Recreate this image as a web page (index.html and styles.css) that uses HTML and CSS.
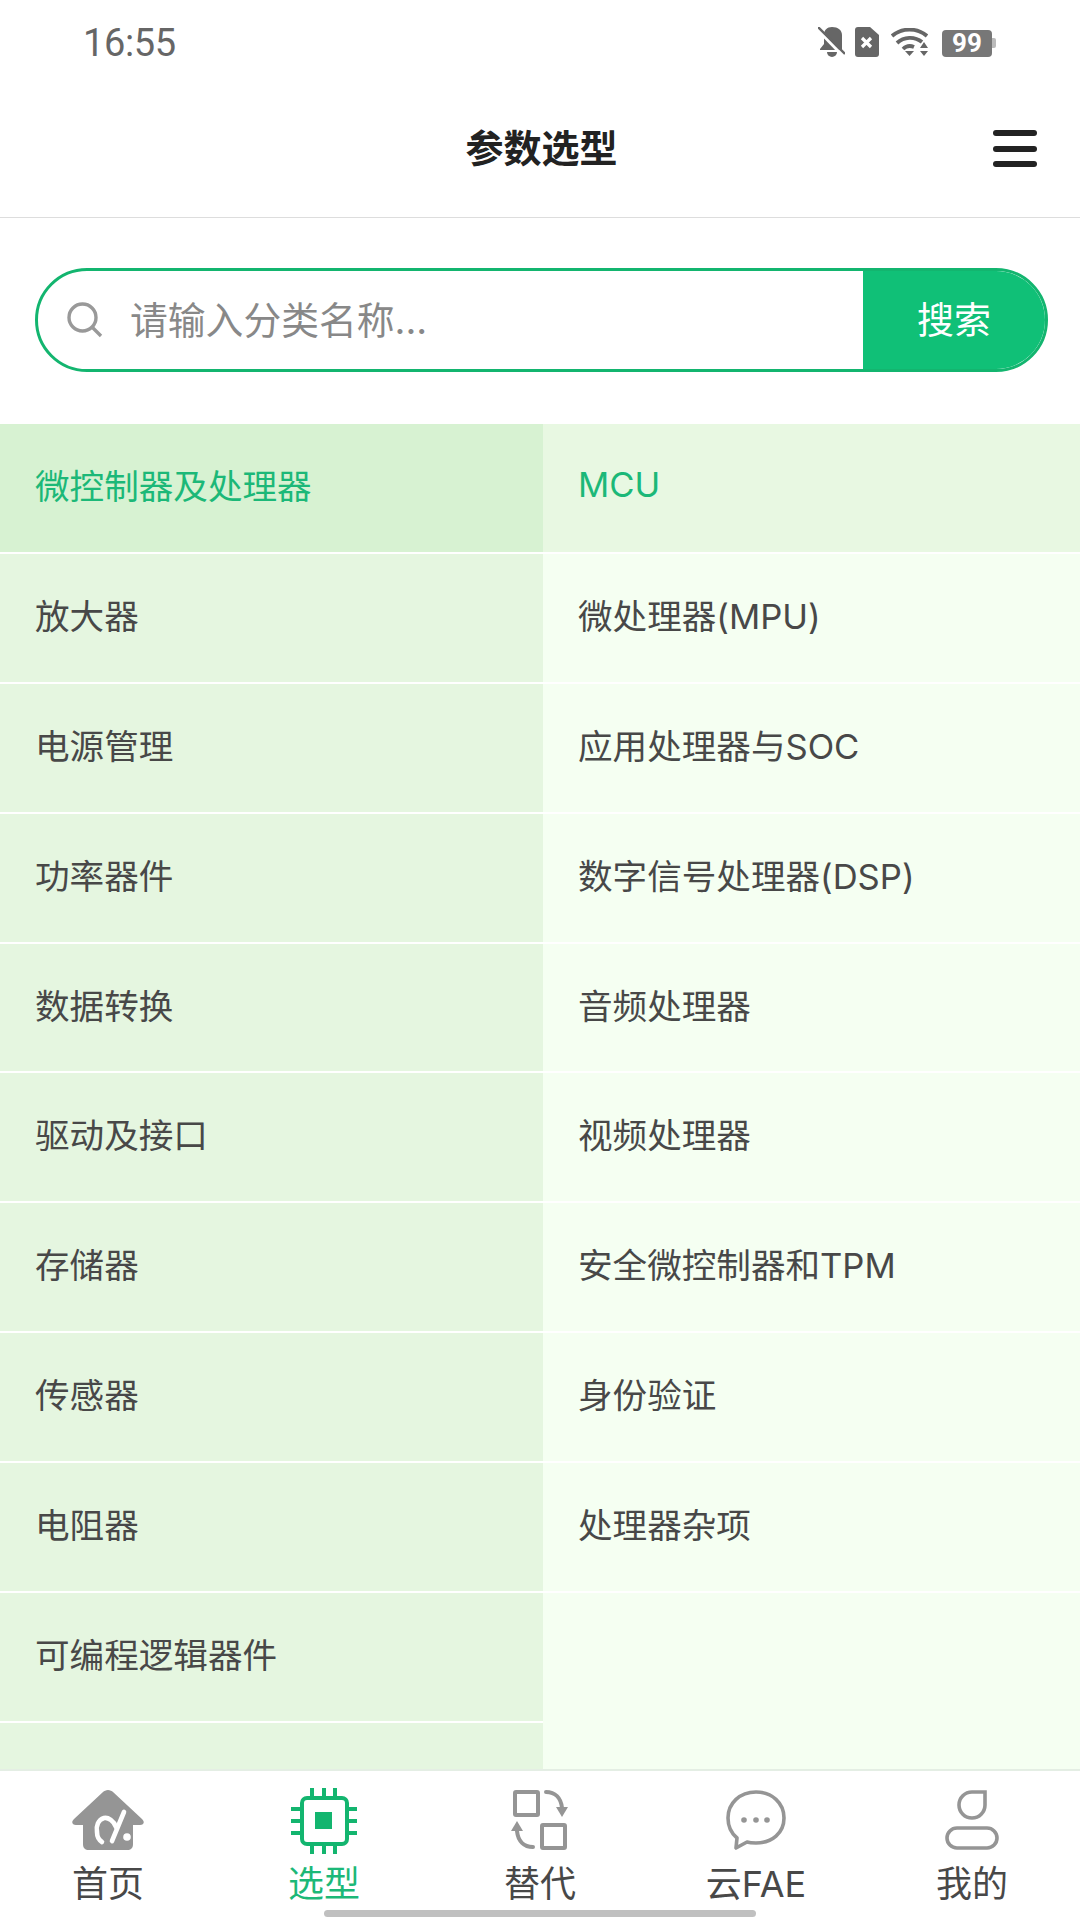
FILE: index.html
```html
<!DOCTYPE html>
<html lang="zh-CN">
<head>
  <meta charset="UTF-8" />
  <meta name="viewport" content="width=device-width, initial-scale=1.0" />
  <title>参数选型</title>
  <link rel="stylesheet" href="styles.css">
</head>
<body>
  <div class="page">
    <!-- Status bar -->
    <div class="status-bar">
      <span class="status-time">16:55</span>
      <div class="status-icons">
        <svg class="st-bell" width="27" height="30" viewBox="0 0 27 30">
          <path d="M14 0c-5 0-8 3-8 8v9l-4 5v1h22V8c0-5-4-8-10-8z" fill="#666"/>
          <path d="M9 25h10a5 5 0 0 1-10 0z" fill="#666"/>
          <path d="M0 3l24 25" stroke="#fff" stroke-width="3"/>
          <path d="M0 0l27 27" stroke="#666" stroke-width="2.4"/>
        </svg>
        <svg class="st-sim" width="24" height="30" viewBox="0 0 24 30">
          <path d="M3 0h12l9 8v19a3 3 0 0 1-3 3H3a3 3 0 0 1-3-3V3a3 3 0 0 1 3-3z" fill="#666"/>
          <path d="M7 11l9 9M16 11l-9 9" stroke="#fff" stroke-width="3.2"/>
        </svg>
        <svg class="st-wifi" width="37" height="28" viewBox="0 0 37 28">
          <path d="M1 8a27 27 0 0 1 35 0" fill="none" stroke="#666" stroke-width="3.8"/>
          <path d="M6 15a19 19 0 0 1 25-1" fill="none" stroke="#666" stroke-width="3.8"/>
          <path d="M12 21a10 10 0 0 1 11-2" fill="none" stroke="#666" stroke-width="3.8"/>
          <path d="M14 23h9l-4.5 5z" fill="#666"/>
          <path d="M33 14l4 6h-8zM29 23h8l-4 5z" fill="#666"/>
        </svg>
        <div class="st-battery">
          <span class="st-battery-level">99</span>
          <span class="st-battery-cap"></span>
        </div>
      </div>
    </div>

    <!-- Title bar -->
    <header class="title-bar">
      <h1>参数选型</h1>
      <div class="menu-btn"><span></span><span></span><span></span></div>
    </header>

    <!-- Search -->
    <div class="search-wrap">
      <div class="search-box">
        <svg class="search-icon" width="36" height="36" viewBox="0 0 36 36">
          <circle cx="15.5" cy="15.5" r="13.5" fill="none" stroke="#999" stroke-width="3.4"/>
          <path d="M25 25l9 9" stroke="#999" stroke-width="3.4"/>
        </svg>
        <span class="search-placeholder">请输入分类名称...</span>
        <div class="search-btn">搜索</div>
      </div>
    </div>

    <!-- Category lists -->
    <div class="lists">
      <ul class="cat-list">
        <li class="active">微控制器及处理器</li>
        <li>放大器</li>
        <li>电源管理</li>
        <li>功率器件</li>
        <li>数据转换</li>
        <li>驱动及接口</li>
        <li>存储器</li>
        <li>传感器</li>
        <li>电阻器</li>
        <li>可编程逻辑器件</li>
        <li></li>
      </ul>
      <ul class="sub-list">
        <li class="active">MCU</li>
        <li>微处理器(MPU)</li>
        <li>应用处理器与SOC</li>
        <li>数字信号处理器(DSP)</li>
        <li>音频处理器</li>
        <li>视频处理器</li>
        <li>安全微控制器和TPM</li>
        <li>身份验证</li>
        <li>处理器杂项</li>
      </ul>
    </div>

    <!-- Bottom tabs -->
    <nav class="tab-bar">
      <div class="tab">
        <svg width="72" height="60" viewBox="0 0 72 60">
          <path d="M36 0c-2 0-4 1-5 2L2 29c-3 3-2 6 2 6h7v19c0 4 2 6 6 6h38c4 0 6-2 6-6V35h7c4 0 5-3 2-6L41 2c-1-1-3-2-5-2z" fill="#959595"/>
          <path d="M44 37C42 31 36 27 32 28c-6 2-8 8-7 14 0 4 2 8 5 10" fill="none" stroke="#fff" stroke-width="4.6" stroke-linecap="round"/>
          <path d="M52 22L40 51" fill="none" stroke="#fff" stroke-width="4.6" stroke-linecap="round"/>
          <circle cx="55" cy="47" r="3.8" fill="#fff"/>
        </svg>
        <span>首页</span>
      </div>
      <div class="tab tab-on">
        <svg class="tab-chip" width="66" height="66" viewBox="0 0 66 66">
          <rect x="11" y="10" width="45" height="46" rx="5" fill="none" stroke="#13b56f" stroke-width="4"/>
          <rect x="24" y="24" width="17" height="17" fill="#13b56f"/>
          <path d="M21 0v10M33 0v10M44 0v10M21 56v10M33 56v10M44 56v10M0 21h11M0 33h11M0 45h11M56 21h10M56 33h10M56 45h10" stroke="#13b56f" stroke-width="4"/>
        </svg>
        <span>选型</span>
      </div>
      <div class="tab">
        <svg width="58" height="60" viewBox="0 0 58 60">
          <rect x="4" y="2" width="23" height="23" rx="1" fill="none" stroke="#959595" stroke-width="4"/>
          <rect x="31" y="35" width="23" height="23" rx="1" fill="none" stroke="#959595" stroke-width="4"/>
          <path d="M35 2c9 0 15 6 16 16" fill="none" stroke="#959595" stroke-width="4" stroke-linecap="round"/>
          <path d="M45 17h12l-6 10z" fill="#959595"/>
          <path d="M22 57C13 57 7 51 6 41" fill="none" stroke="#959595" stroke-width="4" stroke-linecap="round"/>
          <path d="M0 41h12L6 31z" fill="#959595"/>
        </svg>
        <span>替代</span>
      </div>
      <div class="tab">
        <svg width="60" height="60" viewBox="0 0 60 60">
          <path d="M11 48C5 43 2 36 2 28 2 13 14 2 30 2s28 11 28 26-12 25-28 25c-3 0-6 0-9-1l-11 6z" fill="none" stroke="#959595" stroke-width="3.6" stroke-linejoin="round"/>
          <circle cx="18" cy="30" r="2.8" fill="#959595"/>
          <circle cx="30" cy="30" r="2.8" fill="#959595"/>
          <circle cx="41" cy="30" r="2.8" fill="#959595"/>
        </svg>
        <span>云FAE</span>
      </div>
      <div class="tab">
        <svg width="54" height="60" viewBox="0 0 54 60">
          <path d="M27 2H40V15A13 13 0 1 1 27 2Z" fill="none" stroke="#959595" stroke-width="3.6"/>
          <rect x="2" y="38" width="50" height="20" rx="10" fill="none" stroke="#959595" stroke-width="3.6"/>
        </svg>
        <span>我的</span>
      </div>
      <div class="home-pill"></div>
    </nav>
  </div>
</body>
</html>
```
FILE: styles.css
```css
/* Page frame */
* {
  box-sizing: border-box;
}
body {
  margin: 0;
  background-color: #fff;
  font-family: "Inter", "Noto Sans CJK SC", sans-serif;
}
.page {
  width: 1080px;
  height: 1920px;
  display: flex;
  flex-direction: column;
  overflow: hidden;
}
/* Status bar */
.status-bar {
  height: 88px;
  flex: none;
  display: flex;
  align-items: center;
  justify-content: space-between;
  padding: 0 84px 4px 83px;
}
.status-time {
  font-family: "Roboto", sans-serif;
  font-size: 38px;
  color: #666;
  letter-spacing: -0.4px;
  margin-top: 2px;
}
.status-icons {
  display: flex;
  align-items: center;
  gap: 10px;
}
.st-wifi {
  margin-left: 2px;
}
.st-battery {
  display: flex;
  align-items: center;
  margin-left: 4px;
  margin-top: 2px;
}
.st-battery-level {
  width: 50px;
  height: 27px;
  background-color: #777;
  border-radius: 4px;
  color: #fff;
  font-family: "Roboto", sans-serif;
  font-weight: 700;
  font-size: 26px;
  line-height: 27px;
  text-align: center;
}
.st-battery-cap {
  width: 4px;
  height: 10px;
  background-color: #bbb;
  border-radius: 0 2px 2px 0;
}
/* Title bar */
.title-bar {
  height: 130px;
  flex: none;
  position: relative;
  display: flex;
  align-items: center;
  justify-content: center;
  border-bottom: 1px solid #ddd;
  padding: 0 0 14px 3px;
}
.title-bar h1 {
  margin: 0;
  font-size: 38px;
  font-weight: 700;
  color: #222;
}
.menu-btn {
  position: absolute;
  right: 43px;
  top: 42px;
  width: 44px;
  display: flex;
  flex-direction: column;
  gap: 9.5px;
}
.menu-btn span {
  height: 6px;
  border-radius: 3px;
  background-color: #222;
}
/* Search */
.search-wrap {
  padding: 50px 32px 52px 35px;
  flex: none;
}
.search-box {
  height: 104px;
  border: 3px solid #13b56f;
  border-radius: 52px;
  display: flex;
  align-items: center;
  padding-left: 29px;
  overflow: hidden;
}
.search-placeholder {
  flex: 1;
  margin-left: 27px;
  padding-bottom: 6px;
  font-size: 37.8px;
  color: #888;
}
.search-btn {
  width: 182px;
  height: 100%;
  background-color: #10c077;
  color: #fff;
  font-size: 37px;
  display: flex;
  align-items: center;
  justify-content: center;
  padding-bottom: 4px;
}
/* Category lists */
.lists {
  flex: 1;
  min-height: 0;
  display: flex;
  overflow: hidden;
}
.cat-list,
.sub-list {
  margin: 0;
  padding: 0;
  list-style: none;
}
.cat-list {
  width: 543px;
  background-color: #e5f6e0;
}
.sub-list {
  flex: 1;
  background-color: #f5fff2;
}
.lists li {
  height: 129.9px;
  padding: 0 0 8px 35px;
  display: flex;
  align-items: center;
  font-size: 34.6px;
  color: #484848;
  border-bottom: 2px solid #fff;
}
.cat-list li.active {
  background-color: #d7f2d2;
  color: #1cb878;
}
.sub-list li.active {
  background-color: #e8f8e2;
  color: #1cb878;
}
/* Bottom tabs */
.tab-bar {
  height: 151px;
  flex: none;
  position: relative;
  display: flex;
  border-top: 2px solid #e4eee4;
  background-color: #fff;
}
.tab {
  flex: 1;
  height: 100%;
  display: flex;
  flex-direction: column;
  align-items: center;
  padding-top: 19px;
  color: #484848;
  font-size: 36px;
}
.tab svg {
  flex: none;
}
.tab .tab-chip {
  margin: -2px 0 -4px;
}
.tab span {
  line-height: 40px;
  margin-top: 14px;
}
.tab-on {
  color: #1cb878;
}
.home-pill {
  position: absolute;
  left: 324px;
  bottom: 3px;
  width: 432px;
  height: 7px;
  border-radius: 4px;
  background-color: #c0c0c0;
}
```
